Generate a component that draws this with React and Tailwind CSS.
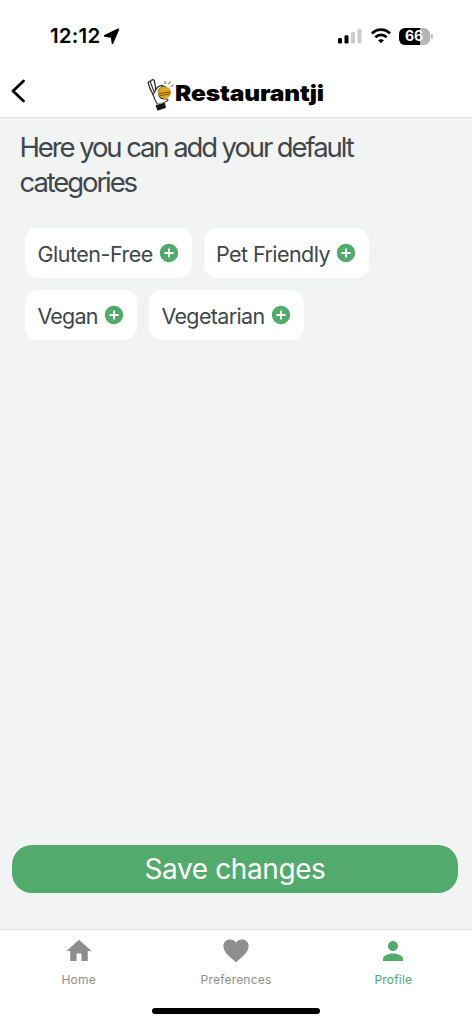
import React from 'react';
import { MdAddCircle, MdHome, MdPerson } from 'react-icons/md';

const categories = [
  { name: 'Gluten-Free', width: 'w-[166.5px]', tracking: 'tracking-[-0.48px]' },
  { name: 'Pet Friendly', width: 'w-[165px]', tracking: 'tracking-[-0.55px]' },
  { name: 'Vegan', width: 'w-[112px]', tracking: 'tracking-[-0.8px]' },
  { name: 'Vegetarian', width: 'w-[154.5px]', tracking: 'tracking-[-0.65px]' },
];

const HeartIcon = () => (
  <svg width="26" height="24" viewBox="0 0 26 24" fill="currentColor">
    <path d="M13 23.2C8.2 18.8.4 13.4.4 7.2.4 3.1 3.4.4 7 .4c2.5 0 4.7 1.1 6 3 1.3-1.9 3.5-3 6-3 3.6 0 6.6 2.7 6.6 6.8 0 6.2-7.8 11.600-12.600 16z" />
  </svg>
);

const LogoMark = () => (
  <svg width="28" height="34" viewBox="0 0 28 34" fill="none" strokeLinecap="round" strokeLinejoin="round">
    {/* fingers */}
    <path
      d="M1.2 4.8c.1-1.400 1.500-1.700 2.300-.8C3.600 1.800 6.500.7 7.300 2.700L8.700 10l-.6 7.500-2-.8C4 13 2.200 9 1.200 4.800z"
      fill="#fff"
      stroke="#2a2a2a"
      strokeWidth="1.300"
    />
    <path d="M3.500 4.500l3.700 9.500" stroke="#333" strokeWidth="1.2" />
    {/* palm curling round the burger */}
    <path
      d="M8.300 12.800c1.200-3 4-5.200 7.200-5.200 1.900.1 2 1.600.5 2.200-3 .8-4.600 2.800-4.400 5.600.2 2.800 2.400 5.200 5.400 5.600 2 .2 3.400-.3 4 .5.500 1-2.500 2.400-4.200 3.200l-6.300 1.500C8.300 23.500 7.300 20 6.100 16.700z"
      fill="#fff"
      stroke="#2a2a2a"
      strokeWidth="1.100"
    />
    <ellipse cx="17.5" cy="14.500" rx="6.500" ry="5.900" fill="#e2a51b" />
    <path d="M12 15.600l11-1.700M12.800 17.600l9.800-1.600" stroke="#765713" strokeWidth="1" />
    <path d="M11.300 13c1-3.500 4.500-5.200 7.600-4.300" stroke="#5d4a1c" strokeWidth=".7" />
    {/* sleeve */}
    <path d="M9.300 27.500l8.100-2.200.9 4.200-7.600 2.400z" fill="#171717" stroke="#171717" strokeWidth="1.200" />
    <path d="M9.500 26.500l7.500-2" stroke="#ccc" strokeWidth=".7" />
    <path d="M18.400 5.500l-.6-2M21.700 6l1.500-2.200M24 8.500l2.200-1.300" stroke="#444" strokeWidth=".9" />
  </svg>
);

const StatusBar = () => (
  <div className="flex h-[66px] items-start justify-between pl-[50px] pr-[39px] pt-[24px]">
    <div className="flex items-center gap-[3px]">
      <span className="text-[20.5px] font-semibold leading-6 tracking-[0.2px] text-black">12:12</span>
      <svg width="17" height="17" viewBox="0 0 17 17">
        <path
          d="M1.800 7.900L15.300 1.400 9.500 15.200 8.800 9.400 8 8.800z"
          fill="#000"
          stroke="#000"
          strokeWidth="1.800"
          strokeLinejoin="round"
        />
      </svg>
    </div>
    <div className="flex h-[24px] items-center">
      <svg width="24" height="16" viewBox="0 0 24 16">
        <rect x="0" y="10" width="4" height="5.5" rx="1.2" />
        <rect x="6.5" y="7.2" width="4" height="8.3" rx="1.2" />
        <rect x="13" y="4" width="4" height="11.5" rx="1.2" fill="#ccc" />
        <rect x="19.5" y=".7" width="4" height="14.8" rx="1.2" fill="#ccc" />
      </svg>
      <svg className="ml-[9px]" width="20" height="16" viewBox="0 0 20 16" fill="none" stroke="#000" strokeWidth="2.7">
        <path d="M1 5.5c5-5.1 13-5.1 18 0M4.300 9.200c3.200-3.100 8.200-3.100 11.400 0" />
        <path d="M10 15.300l-3-3c1.700-1.500 4.300-1.500 6 0z" fill="#000" stroke="none" />
      </svg>
      <div className="ml-[8px] flex h-[17px] w-[31px] items-center justify-center rounded-[6px] bg-[linear-gradient(90deg,#000_67%,#b5b5b5_67%)] pr-[1px] text-[14px] font-bold leading-none text-white">
        66
      </div>
      <span className="ml-[1px] h-[5px] w-[2px] rounded-r-full bg-[#bbb]" />
    </div>
  </div>
);

const Header = () => (
  <header className="flex h-[52px] items-start border-b border-[#dcdfdf] bg-white">
    <button className="ml-[11px] mt-[13px]" aria-label="Back">
      <svg width="15" height="24" viewBox="0 0 15 24" fill="none" stroke="#000" strokeWidth="2.8" strokeLinecap="round" strokeLinejoin="round">
        <path d="M12.5 2L2 12l10.5 10" />
      </svg>
    </button>
    <div className="ml-[121px] mt-[12px] flex">
      <LogoMark />
      <span className="-mt-[1px] origin-left scale-x-[1.11] whitespace-nowrap text-[22px] font-black leading-[32px] tracking-[-0.1px] text-black">
        Restaurantji
      </span>
    </div>
  </header>
);

const BottomNav = () => (
  <nav className="h-[95px] border-t border-[#e3e6e5] bg-white">
    <div className="grid h-[78px] grid-cols-3 text-[12px] leading-4 tracking-[0.2px] text-[#8e8e8e]">
      <div className="flex flex-col items-center pt-[6px]">
        <MdHome size={30} />
        <span className="mt-[6px]">Home</span>
      </div>
      <div className="flex flex-col items-center pt-[9px]">
        <HeartIcon />
        <span className="mt-[9px]">Preferences</span>
      </div>
      <div className="flex flex-col items-center pt-[6px] text-[#52ab6c]">
        <MdPerson size={30} />
        <span className="mt-[6px]">Profile</span>
      </div>
    </div>
    <div className="mx-auto h-[6px] w-[168px] rounded-full bg-black" />
  </nav>
);

const App = () => (
  <div className="flex h-[1024px] w-[472px] flex-col bg-white font-['Inter',sans-serif]">
    <StatusBar />
    <Header />
    <main className="flex flex-1 flex-col bg-[#f2f4f4]">
      <h1 className="ml-[19.5px] mt-[12px] text-[27.5px] leading-[34.5px] tracking-[-2.1px] text-[#40464b]">
        Here you can add your default
        <br />
        categories
      </h1>
      <div className="ml-[25.4px] mt-[29.4px] flex w-[400px] flex-wrap gap-[12px]">
        {categories.map((category) => (
          <button
            key={category.name}
            className={`flex h-[50px] items-center justify-between rounded-[13px] bg-white pl-[12px] pr-[12px] text-[21.5px] text-[#40464b] ${category.width} ${category.tracking}`}
          >
            <span className="whitespace-nowrap pt-[2px]">{category.name}</span>
            <MdAddCircle size={22} className="shrink-0 text-[#52ab6c]" />
          </button>
        ))}
      </div>
      <button className="mb-[36.5px] ml-[12px] mt-auto h-[48px] w-[446px] rounded-[20px] bg-[#52ab6c] text-[28px] leading-[48px] tracking-[-0.4px] text-white">
        Save changes
      </button>
    </main>
    <BottomNav />
  </div>
);

export default App;
